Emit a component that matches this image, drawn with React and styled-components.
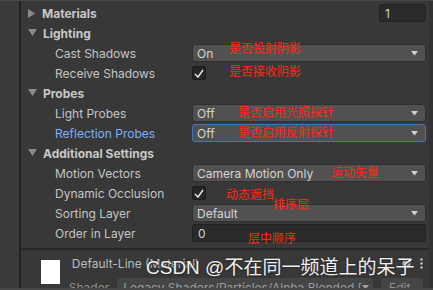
import React from "react";
import styled, { createGlobalStyle } from "styled-components";

const Global = createGlobalStyle`
  html, body {
    margin: 0;
    padding: 0;
    background: #383838;
  }
  body {
    width: 433px;
    height: 290px;
    overflow: hidden;
    font-family: Inter, "Noto Sans", "Liberation Sans", sans-serif;
    font-size: 12px;
    color: #c4c4c4;
  }
`;

const Window = styled.div`
  position: relative;
  width: 433px;
  height: 290px;
  display: flex;
  flex-direction: column;
  border-top: 1px solid #474747;
  box-sizing: border-box;
  overflow: hidden;
`;

const Body = styled.div`
  flex: 1;
  display: flex;
  min-height: 0;
`;

const Gutter = styled.div`
  width: 19px;
  background: #3a3a3a;
`;

const Divider = styled.div`
  width: 2px;
  background: #232323;
`;

const Panel = styled.div`
  flex: 1;
  padding-top: 2px;
  overflow: hidden;
`;

const RightEdge = styled.div`
  width: 4px;
  background: #323232;
`;

const BottomBar = styled.div`
  height: 2px;
  background: #474747;
`;

const Row = styled.div`
  position: relative;
  height: 20px;
  display: grid;
  grid-template-columns: 171px 1fr;
  align-items: center;
  padding-right: 3px;
`;

const Header = styled.div`
  display: flex;
  align-items: center;
  gap: 6px;
  padding-left: 7px;
  font-weight: 700;
  color: #c8c8c8;
  white-space: nowrap;
`;

const Label = styled.div`
  padding-left: 34px;
  color: ${(p) => (p.$active ? "#7baefa" : "#c4c4c4")};
  white-space: nowrap;
`;

const Dropdown = styled.div`
  height: 18px;
  box-sizing: border-box;
  display: flex;
  align-items: center;
  justify-content: space-between;
  padding: 0 7px 0 4px;
  background: #515151;
  border: 1px solid ${(p) => (p.$focus ? "#3a79bb" : "#303030")};
  border-radius: 3px;
  color: #d4d4d4;
  white-space: nowrap;
`;

const Field = styled.div`
  height: 18px;
  box-sizing: border-box;
  display: flex;
  align-items: center;
  padding-left: 5px;
  background: #2a2a2a;
  border: 1px solid #212121;
  border-radius: 3px;
  color: #d4d4d4;
  width: ${(p) => p.$width || "auto"};
  justify-self: ${(p) => (p.$width ? "end" : "stretch")};
`;

const CheckBox = styled.div`
  width: 14px;
  height: 14px;
  box-sizing: border-box;
  background: #262626;
  border: 1px solid #1c1c1c;
  border-radius: 2px;
  display: flex;
  align-items: center;
  justify-content: center;
`;

const Note = styled.span`
  position: absolute;
  left: ${(p) => p.$x}px;
  top: ${(p) => p.$y}px;
  font-family: "Noto Sans CJK SC", sans-serif;
  font-size: 12px;
  line-height: 14px;
  color: #ff2a14;
  white-space: nowrap;
  pointer-events: none;
`;

const Separator = styled.div`
  height: 2px;
  margin-top: 5px;
  background: #272727;
`;

const MaterialBlock = styled.div`
  display: flex;
  align-items: flex-start;
  padding: 5px 6px 0 20px;
`;

const Swatch = styled.div`
  width: 24px;
  height: 24px;
  margin-top: 5px;
  background: #ffffff;
`;

const MaterialInfo = styled.div`
  flex: 1;
  margin-left: 9px;
  display: flex;
  flex-direction: column;
  gap: 7px;
`;

const TitleRow = styled.div`
  height: 16px;
  display: flex;
  align-items: center;
  padding-left: 3px;
  color: #bcbcbc;
  white-space: nowrap;
`;

const TitleIcons = styled.div`
  margin-left: auto;
  display: flex;
  align-items: center;
  gap: 9px;
`;

const ShaderRow = styled.div`
  height: 18px;
  display: flex;
  align-items: center;
  gap: 8px;
  color: #8e8e8e;
  white-space: nowrap;
`;

const ShaderSelect = styled.div`
  flex: 1;
  height: 18px;
  box-sizing: border-box;
  display: flex;
  align-items: center;
  justify-content: space-between;
  padding: 0 4px 0 6px;
  background: #454545;
  border-radius: 3px;
  color: #9c9c9c;
  overflow: hidden;
`;

const EditButton = styled.div`
  width: 42px;
  height: 18px;
  box-sizing: border-box;
  padding-left: 8px;
  display: flex;
  align-items: center;
  background: #454545;
  border-radius: 3px;
  color: #8e8e8e;
`;

const Watermark = styled.div`
  position: absolute;
  left: 146px;
  top: 254px;
  font-family: "Liberation Sans", "Noto Sans CJK SC", sans-serif;
  font-size: 19px;
  line-height: 26px;
  color: #f0f0f0;
  text-shadow: 0 0 2px #222, 1px 1px 1px #333;
  white-space: nowrap;
  pointer-events: none;
`;

const Caret = ({ open }) =>
  open ? (
    <svg width="9" height="8" viewBox="0 0 9 8">
      <polygon points="0,0 9,0 4.5,7" fill="#8a8a8a" />
    </svg>
  ) : (
    <svg width="8" height="9" viewBox="0 0 8 9">
      <polygon points="0,0 7,4.5 0,9" fill="#8a8a8a" />
    </svg>
  );

const Arrow = ({ color = "#d0d0d0" }) => (
  <svg width="7" height="5" viewBox="0 0 7 5">
    <polygon points="0,0 7,0 3.5,4.5" fill={color} />
  </svg>
);

const Check = () => (
  <svg width="10" height="9" viewBox="0 0 10 9">
    <path d="M1 5 L4 8 L9 1" stroke="#e6e6e6" strokeWidth="1.5" fill="none" />
  </svg>
);

const Select = ({ value, focus }) => (
  <Dropdown $focus={focus}>
    <span>{value}</span>
    <Arrow />
  </Dropdown>
);

export default function App() {
  return (
    <Window>
      <Global />
      <Body>
        <Gutter />
        <Divider />
        <Panel>
          <Row>
            <Header>
              <Caret />
              Materials
            </Header>
            <Field $width="47px">1</Field>
          </Row>
          <Row>
            <Header>
              <Caret open />
              Lighting
            </Header>
          </Row>
          <Row>
            <Label>Cast Shadows</Label>
            <Select value="On" />
            <Note $x={208} $y={-2}>是否投射阴影</Note>
          </Row>
          <Row>
            <Label>Receive Shadows</Label>
            <CheckBox>
              <Check />
            </CheckBox>
            <Note $x={208} $y={1}>是否接收阴影</Note>
          </Row>
          <Row>
            <Header>
              <Caret open />
              Probes
            </Header>
          </Row>
          <Row>
            <Label>Light Probes</Label>
            <Select value="Off" />
            <Note $x={217} $y={2}>是否启用光照探针</Note>
          </Row>
          <Row>
            <Label $active>Reflection Probes</Label>
            <Select value="Off" focus />
            <Note $x={217} $y={2}>是否启用反射探针</Note>
          </Row>
          <Row>
            <Header>
              <Caret open />
              Additional Settings
            </Header>
          </Row>
          <Row>
            <Label>Motion Vectors</Label>
            <Select value="Camera Motion Only" />
            <Note $x={310} $y={2}>运动矢量</Note>
          </Row>
          <Row>
            <Label>Dynamic Occlusion</Label>
            <CheckBox>
              <Check />
            </CheckBox>
            <Note $x={205} $y={4}>动态遮挡</Note>
          </Row>
          <Row>
            <Label>Sorting Layer</Label>
            <Select value="Default" />
            <Note $x={252} $y={-6}>排序层</Note>
          </Row>
          <Row>
            <Label>Order in Layer</Label>
            <Field>0</Field>
            <Note $x={227} $y={8}>层中顺序</Note>
          </Row>
          <Separator />
          <MaterialBlock>
            <Swatch />
            <MaterialInfo>
              <TitleRow>
                Default-Line (Material)
                <TitleIcons>
                  <svg width="9" height="9" viewBox="0 0 9 9">
                    <circle cx="4.5" cy="4.5" r="4" fill="#c4c4c4" />
                  </svg>
                  <svg width="3" height="11" viewBox="0 0 3 11">
                    <circle cx="1.5" cy="1.5" r="1.2" fill="#c4c4c4" />
                    <circle cx="1.5" cy="5.5" r="1.2" fill="#c4c4c4" />
                    <circle cx="1.5" cy="9.5" r="1.2" fill="#c4c4c4" />
                  </svg>
                </TitleIcons>
              </TitleRow>
              <ShaderRow>
                Shader
                <ShaderSelect>
                  <span>Legacy Shaders/Particles/Alpha Blended [</span>
                  <Arrow color="#a0a0a0" />
                </ShaderSelect>
                <EditButton>Edit...</EditButton>
              </ShaderRow>
            </MaterialInfo>
          </MaterialBlock>
        </Panel>
        <RightEdge />
      </Body>
      <BottomBar />
      <Watermark>CSDN @不在同一频道上的呆子</Watermark>
    </Window>
  );
}
